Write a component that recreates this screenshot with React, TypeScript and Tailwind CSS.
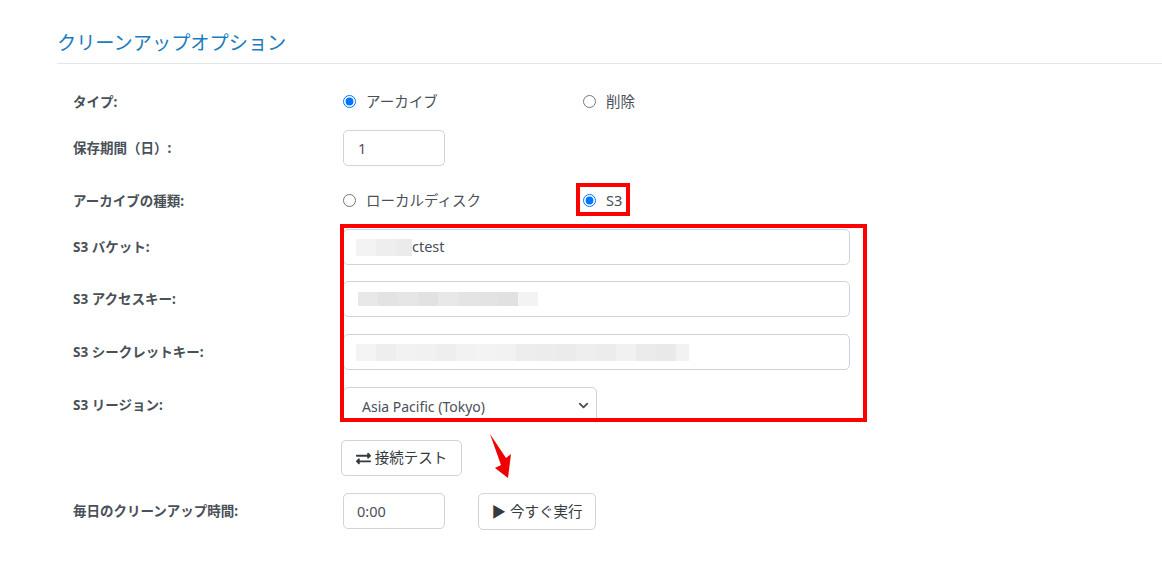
import type { ReactNode } from "react";
import { ChevronDown } from "lucide-react";
import { FaExchangeAlt } from "react-icons/fa";

const bucketCells = ["bg-[#f3f3f3]", "bg-[#eeeeee]", "bg-[#ebebeb]"];
const accessCells = ["bg-[#e8e8e8]", "bg-[#e3e3e3]", "bg-[#e6e6e6]", "bg-[#e2e2e2]", "bg-[#e8e8e8]", "bg-[#e4e4e4]", "bg-[#e3e3e3]", "bg-[#e1e1e1]", "bg-[#f3f3f3]"];
const secretCells = ["bg-[#f4f4f4]", "bg-[#eeeeee]", "bg-[#f2f2f2]", "bg-[#f1f1f1]", "bg-[#eeeeee]", "bg-[#f2f2f2]", "bg-[#f3f3f3]", "bg-[#f2f2f2]", "bg-[#ededed]", "bg-[#ececec]", "bg-[#ebebeb]", "bg-[#eeeeee]", "bg-[#ececec]", "bg-[#f1f1f1]", "bg-[#ebebeb]", "bg-[#e9e9e9]", "bg-[#f2f2f2]"];

function Row({ label, className, children }: { label?: ReactNode; className: string; children: ReactNode }) {
  return (
    <div className={`flex h-9 items-center ${className}`}>
      <div className="w-[270px] pl-[16px] text-[13.5px] font-bold text-[#495057]">{label}</div>
      {children}
    </div>
  );
}

function Radio({ label, checked, className }: { label: string; checked?: boolean; className?: string }) {
  return (
    <label className={`mb-[1px] flex items-center gap-[10px] text-[14.5px] text-[#495057] ${className}`}>
      <input type="radio" defaultChecked={checked} name={label} className="m-0 h-[13px] w-[13px] accent-[#0075ff]" />
      <span className="mt-[1px]">{label}</span>
    </label>
  );
}

function Mosaic({ cells, className }: { cells: string[]; className: string }) {
  return (
    <div className={`flex overflow-hidden ${className}`}>
      {cells.map((c, i) => (
        <div key={i} className={`h-full w-5 shrink-0 ${c}`} />
      ))}
    </div>
  );
}

function TextBox({ children }: { children: ReactNode }) {
  return (
    <div className="flex h-9 w-[507px] items-center rounded-[5px] border border-[#ced4da] bg-white pl-[12px] text-[14.5px] text-[#495057]">
      {children}
    </div>
  );
}

export default function App() {
  return (
    <div className="relative h-[563px] w-[1162px] overflow-hidden bg-white pl-[57px] font-['Noto_Sans','Noto_Sans_CJK_JP',sans-serif]">
      <h2 className="flex h-[64px] items-end border-b border-[#e3e6ea] pb-[5px] text-[19.2px] text-[#1a7cbe]">
        クリーンアップオプション
      </h2>

      <Row label="タイプ:" className="mt-[20px]">
        <Radio label="アーカイブ" checked className="w-[256px] pl-[16px]" />
        <Radio label="削除" />
      </Row>

      <Row label="保存期間（日）:" className="mt-[10px]">
        <input
          defaultValue="1"
          className="ml-[16px] h-9 w-[102px] rounded-[5px] border border-[#ced4da] pl-[14px] text-[14.5px] text-[#5f4a58]"
        />
      </Row>

      <Row label="アーカイブの種類:" className="mt-[17px]">
        <Radio label="ローカルディスク" className="w-[256px] pl-[16px]" />
        <Radio label="S3" checked />
      </Row>

      <Row label={<><span>S3</span> バケット:</>} className="mt-[10px]">
        <div className="ml-[16px]">
          <TextBox>
            <Mosaic cells={bucketCells} className="h-[17px] w-[56px]" />
            ctest
          </TextBox>
        </div>
      </Row>

      <Row label={<><span>S3</span> アクセスキー:</>} className="mt-[16px]">
        <div className="ml-[16px]">
          <TextBox>
            <Mosaic cells={accessCells} className="ml-[2px] h-[14px]" />
          </TextBox>
        </div>
      </Row>

      <Row label={<><span>S3</span> シークレットキー:</>} className="mt-[17px]">
        <div className="ml-[16px]">
          <TextBox>
            <Mosaic cells={secretCells} className="h-[17px] w-[333px]" />
          </TextBox>
        </div>
      </Row>

      <Row label={<><span>S3</span> リージョン:</>} className="mt-[17px]">
        <div className="relative ml-[16px] w-[254px] self-start">
          <select className="h-[35px] w-full appearance-none rounded-[5px] border border-[#ced4da] bg-white pl-[18px] pt-[4px] text-[14px] text-[#495057]">
            <option>Asia Pacific (Tokyo)</option>
          </select>
          <ChevronDown size={15} strokeWidth={3} className="pointer-events-none absolute right-[6px] top-[11px] text-[#495057]" />
        </div>
      </Row>

      <Row className="mt-[17px]">
        <button className="ml-[14px] flex h-9 w-[121px] items-center justify-center gap-[4px] rounded-[5px] border border-[#ced4da] text-[14.5px] text-[#343a40]">
          <FaExchangeAlt size={15} />
          接続テスト
        </button>
      </Row>

      <Row label="毎日のクリーンアップ時間:" className="mt-[17px]">
        <input
          defaultValue="0:00"
          className="ml-[16px] h-9 w-[102px] rounded-[5px] border border-[#ced4da] pl-[13px] text-[14.5px] text-[#495057]"
        />
        <button className="ml-[33px] h-[37px] w-[118px] rounded-[5px] border border-[#ced4da] pt-[1px] text-[14.5px] text-[#343a40]">
          ▶ 今すぐ実行
        </button>
      </Row>

      {/* annotations drawn over the screenshot */}
      <div className="pointer-events-none absolute left-[576px] top-[183px] h-[33px] w-[54px] border-[4px] border-[#ff0000]" />
      <div className="pointer-events-none absolute left-[340px] top-[224px] h-[198px] w-[527px] border-[4px] border-[#ff0000]" />
      <svg className="pointer-events-none absolute left-[485px] top-[430px]" width="32" height="52" viewBox="485 430 32 52">
        <path d="M490 434 L506 458 L511 454 L508 478 L495 468 L501 465 Z" fill="#ee0000" />
      </svg>
    </div>
  );
}
